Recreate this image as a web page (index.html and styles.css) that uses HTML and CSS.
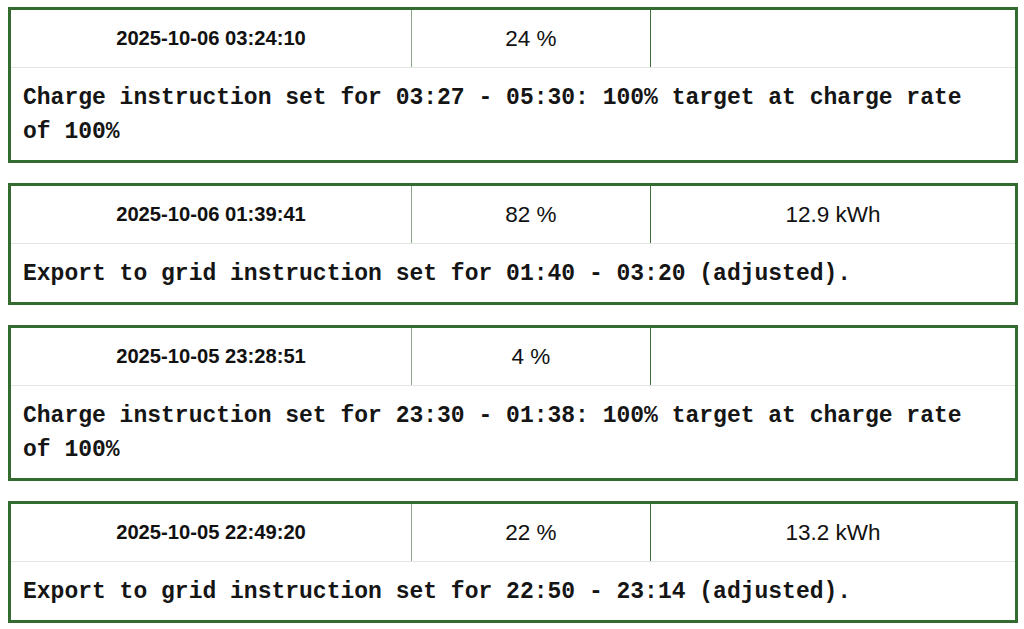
FILE: index.html
```html
<!DOCTYPE html>
<html>
<head>
<meta charset="utf-8">
<link rel="stylesheet" href="styles.css">
</head>
<body>
<div class="list">
  <div class="card">
    <div class="head">
      <div class="cell date">2025-10-06 03:24:10</div>
      <div class="cell soc">24 %</div>
      <div class="cell energy"></div>
    </div>
    <div class="msg">Charge instruction set for 03:27 - 05:30: 100% target at charge rate of 100%</div>
  </div>
  <div class="card">
    <div class="head">
      <div class="cell date">2025-10-06 01:39:41</div>
      <div class="cell soc">82 %</div>
      <div class="cell energy">12.9 kWh</div>
    </div>
    <div class="msg">Export to grid instruction set for 01:40 - 03:20 (adjusted).</div>
  </div>
  <div class="card">
    <div class="head">
      <div class="cell date">2025-10-05 23:28:51</div>
      <div class="cell soc">4 %</div>
      <div class="cell energy"></div>
    </div>
    <div class="msg">Charge instruction set for 23:30 - 01:38: 100% target at charge rate of 100%</div>
  </div>
  <div class="card">
    <div class="head">
      <div class="cell date">2025-10-05 22:49:20</div>
      <div class="cell soc">22 %</div>
      <div class="cell energy">13.2 kWh</div>
    </div>
    <div class="msg">Export to grid instruction set for 22:50 - 23:14 (adjusted).</div>
  </div>
</div>
</body>
</html>
```
FILE: styles.css
```css
html, body {
  margin: 0;
  padding: 0;
  background: #ffffff;
}
body {
  padding: 7px 6px 0 8px;
  font-family: "Liberation Sans", Arial, sans-serif;
  color: #111;
}
.list {
  display: flex;
  flex-direction: column;
  gap: 20px;
}
.card {
  border: 3px solid #336b30;
  background: #fff;
}
.head {
  display: grid;
  grid-template-columns: 401px 239px 1fr;
  height: 57px;
  border-bottom: 1px solid #e4e6e4;
}
.cell {
  display: flex;
  align-items: center;
  justify-content: center;
  font-size: 22.5px;
}
.date {
  font-weight: bold;
  font-size: 20.2px;
  border-right: 1px solid #8ba688;
}
.soc {
  border-right: 1px solid #3f6e3b;
}
.msg {
  font-family: "Liberation Mono", "Courier New", monospace;
  font-weight: bold;
  font-size: 23px;
  line-height: 34px;
  padding: 13px 30px 11px 12px;
  color: #151515;
}
```
